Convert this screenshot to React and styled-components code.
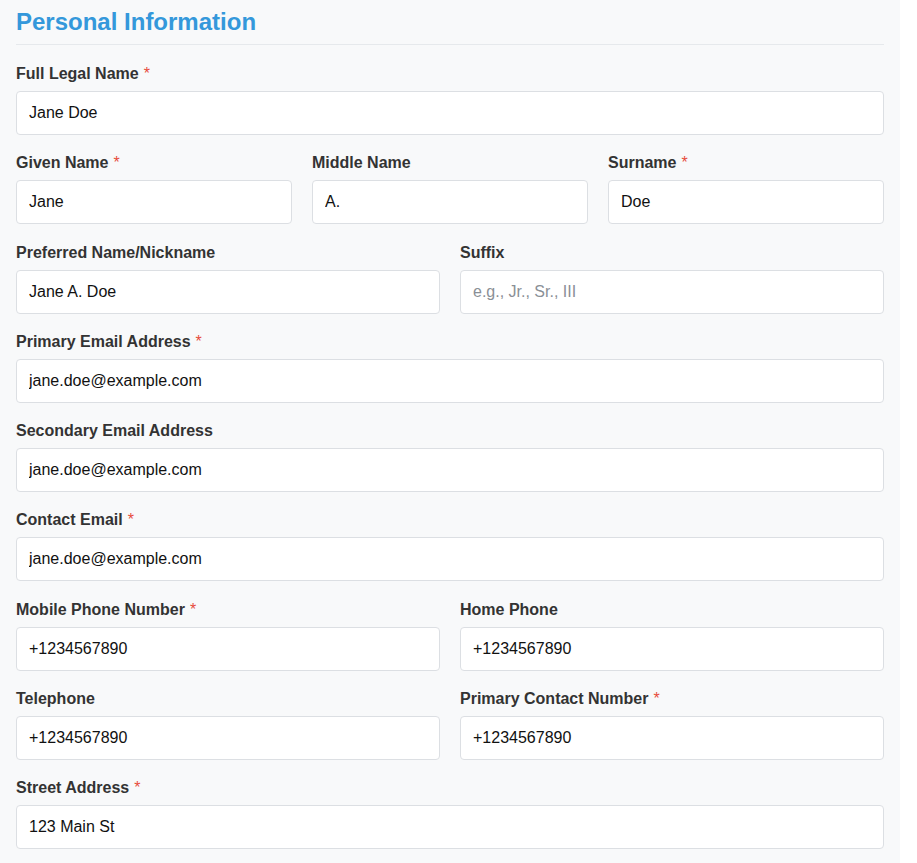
import React from 'react';
import styled, { createGlobalStyle } from 'styled-components';

const GlobalStyle = createGlobalStyle`
  body {
    margin: 0;
    background: #ffffff;
    font-family: "Liberation Sans", Arial, sans-serif;
    color: #333;
  }
`;

const Page = styled.div`
  width: 900px;
  box-sizing: border-box;
  padding: 8px 16px 24px;
  background-color: #f8f9fa;
  min-height: 100vh;
`;

const SectionTitle = styled.h2`
  margin: 0 0 20px;
  padding-bottom: 8px;
  font-size: 24px;
  font-weight: bold;
  color: #3498db;
  border-bottom: 1px solid #e6e9ec;
`;

const Row = styled.div`
  display: grid;
  grid-template-columns: repeat(${p => p.cols || 1}, 1fr);
  column-gap: 20px;
`;

const Field = styled.div`
  margin-bottom: 19.25px;
`;

const Label = styled.label`
  display: block;
  margin-bottom: 8px;
  font-size: 16px;
  font-weight: bold;
  color: #333;
`;

const Required = styled.span`
  color: #e74c3c;
  font-weight: normal;
  margin-left: 5px;
`;

const Input = styled.input`
  display: block;
  width: 100%;
  box-sizing: border-box;
  height: 44px;
  padding: 12px;
  font-family: "Liberation Sans", Arial, sans-serif;
  font-size: 16px;
  color: #111;
  background: #fff;
  border: 1px solid #dcdfe3;
  border-radius: 4px;
  outline: none;

  &::placeholder {
    color: #8a8f96;
  }
`;

const rows = [
  [{ label: 'Full Legal Name', req: true, value: 'Jane Doe' }],
  [
    { label: 'Given Name', req: true, value: 'Jane' },
    { label: 'Middle Name', value: 'A.' },
    { label: 'Surname', req: true, value: 'Doe' },
  ],
  [
    { label: 'Preferred Name/Nickname', value: 'Jane A. Doe' },
    { label: 'Suffix', placeholder: 'e.g., Jr., Sr., III' },
  ],
  [{ label: 'Primary Email Address', req: true, value: 'jane.doe@example.com' }],
  [{ label: 'Secondary Email Address', value: 'jane.doe@example.com' }],
  [{ label: 'Contact Email', req: true, value: 'jane.doe@example.com' }],
  [
    { label: 'Mobile Phone Number', req: true, value: '+1234567890' },
    { label: 'Home Phone', value: '+1234567890' },
  ],
  [
    { label: 'Telephone', value: '+1234567890' },
    { label: 'Primary Contact Number', req: true, value: '+1234567890' },
  ],
  [{ label: 'Street Address', req: true, value: '123 Main St' }],
];

const App = () => (
  <>
    <GlobalStyle />
    <Page>
      <SectionTitle>Personal Information</SectionTitle>
      {rows.map((row, i) => (
        <Row key={i} cols={row.length}>
          {row.map(f => (
            <Field key={f.label}>
              <Label>
                {f.label}
                {f.req && <Required>*</Required>}
              </Label>
              <Input
                type="text"
                defaultValue={f.value}
                placeholder={f.placeholder}
              />
            </Field>
          ))}
        </Row>
      ))}
    </Page>
  </>
);

export default App;
